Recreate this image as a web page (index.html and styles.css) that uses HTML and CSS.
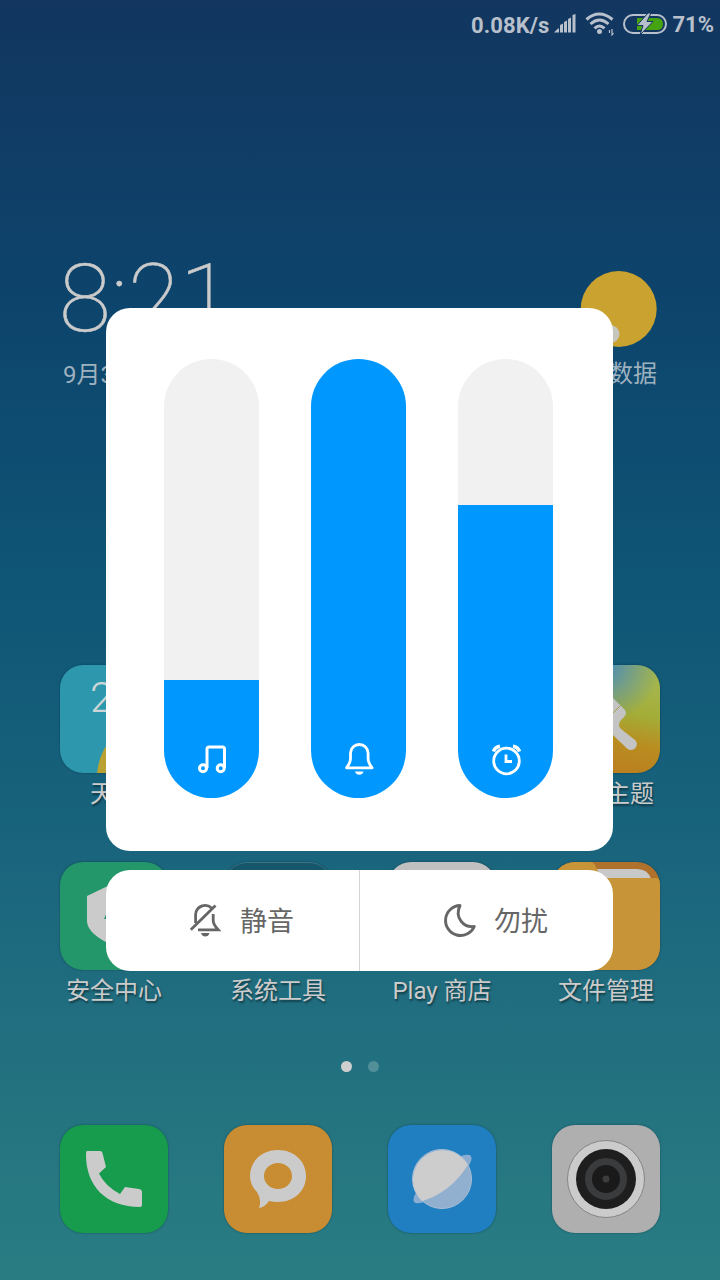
FILE: index.html
```html
<!DOCTYPE html>
<html lang="zh-CN">
<head>
<meta charset="utf-8">
<title>音量</title>
<link rel="stylesheet" href="styles.css">
</head>
<body>
<div class="phone">
  <header class="status">
    <span class="speed">0.08K/s</span>
    <svg class="signal" width="22" height="20" viewBox="0 0 22 20" fill="#b8c0cc"><path d="M0 18.500l4-4h1v4zM6 11l3-1.500v9H6zM10 8l3-1.500v12h-3zM14 5l3-1.500v15h-3zM18.500 1L21.500 0v18.500h-3z"/></svg>
    <svg class="wifi" width="30" height="24" viewBox="0 0 30 24" fill="none" stroke="#b8c0cc" stroke-width="3"><path d="M1.500 7.500q12.500-11 26 0M5.500 12q9-8 18 0M9.500 16.300q5-4.500 10 0"/><circle cx="14.500" cy="19.500" r="2.500" fill="#b8c0cc" stroke="none"/><path stroke-width="1.200" d="M24.500 18v3M27 17v6l1.500-2"/></svg>
    <svg class="battery" width="44" height="22" viewBox="0 0 44 22"><rect x="1" y="2" width="42" height="18" rx="9" fill="none" stroke="#b8c0cc" stroke-width="2"/><path d="M14 5h20q6 0 6 6t-6 6H14z" fill="#45a30f"/><path d="M25 0L14 12.500h6L17 22l13-13.500h-6l4-8.500z" fill="#b8c0cc" stroke="#12375f" stroke-width="1"/></svg>
    <span class="percent">71%</span>
  </header>

  <section class="widget">
    <div class="clock">
      <div class="time">8<span class="colon">:</span>21</div>
      <div class="date">9月3日 星期二</div>
    </div>
    <div class="weather">
      <svg width="78" height="76" viewBox="0 0 78 76"><circle cx="38.700" cy="38" r="38" fill="#caa22f"/><circle cx="30.500" cy="63" r="9" fill="#c6c6bd"/></svg>
      <div class="weather-text">无数据</div>
    </div>
  </section>

  <main class="apps">
    <div class="app">
      <svg class="icon teal" viewBox="0 0 108 108"><path d="M37 108C40 82 56 62 80 60v48z" fill="#b9a132"/><text x="30" y="47" class="temp">26</text></svg>
      <span class="label">天气</span>
    </div>
    <div class="app"></div>
    <div class="app"></div>
    <div class="app">
      <svg class="icon theme" viewBox="0 0 108 108"><path d="M40 40L61 33l11 11q4 4 0 8l-3 3q-4 5 0 9l14 11a5.600 5.600 0 0 1-8 8.500L61 70 45 57z" fill="#c4c4c4"/><path d="M59 50l9-9" stroke="#a69b49" stroke-width="1"/></svg>
      <span class="label">个性主题</span>
    </div>
    <div class="app">
      <svg class="icon green" viewBox="0 0 108 108"><path d="M27 34l27-13 27 13v25q0 13-27 25Q27 72 27 59z" fill="#cbcbcb"/><path d="M44 57l9-21 9 21z" fill="#23966a"/></svg>
      <span class="label">安全中心</span>
    </div>
    <div class="app">
      <div class="icon folder"></div>
      <span class="label">系统工具</span>
    </div>
    <div class="app">
      <div class="icon store"></div>
      <span class="label">Play 商店</span>
    </div>
    <div class="app">
      <svg class="icon files" viewBox="0 0 108 108"><path d="M30 7h55q11 0 14 10H30z" fill="#c8c8c8"/><path d="M0 0h38q4 0 6 5l3 6q3 5 8 5h49q4 0 4 4v88H0z" fill="#c79438"/></svg>
      <span class="label">文件管理</span>
    </div>
  </main>

  <div class="pages"><i class="dot on"></i><i class="dot"></i></div>

  <nav class="dock">
    <svg class="icon phone-icon" viewBox="0 0 108 108"><path d="M27 26h13q2 0 2.500 2L46 42l-7 6.500q6 12.500 21 20.500l5-7 14 2q3 .500 3 3v13q0 2-2 2C46 82 26 61 26 30q0-4 1-4z" fill="#cbcbcb"/></svg>
    <svg class="icon sms-icon" viewBox="0 0 108 108"><path fill="#cbcbcb" fill-rule="evenodd" d="M54 25c16 0 28 11 28 26S70 77 54 77q-5 0-9-1-4 6-10 7 3-8-2-16-7-7-7-16c0-15 12-26 28-26zm0 13a14 13 0 1 0 0 26 14 13 0 1 0 0-26z"/></svg>
    <svg class="icon web-icon" viewBox="0 0 108 108"><ellipse cx="54.500" cy="54" rx="36.500" ry="10" transform="rotate(-39 54.500 54)" fill="#8badd1"/><circle cx="54" cy="54" r="29.500" fill="#91afcf" stroke="#a9bed5" stroke-width="1"/><path d="M34 76A29.500 29.500 0 1 1 80 40Q62 68 34 76z" fill="#cdcdcd"/></svg>
    <svg class="icon camera-icon" viewBox="0 0 108 108"><circle cx="54" cy="54" r="38.500" fill="#cbcbcb" stroke="#858585" stroke-width="1"/><circle cx="54" cy="54" r="30" fill="#1e1e1f"/><circle cx="54" cy="54" r="17.500" fill="#1a1a1a" stroke="#3a3b3d" stroke-width="7"/><circle cx="54" cy="54" r="3.500" fill="#3d3d3d"/></svg>
  </nav>

  <div class="overlay">
    <section class="sliders">
      <div class="slider"><div class="fill" style="height:118px">
        <svg width="36" height="36" viewBox="0 0 36 36" fill="none" stroke="#fff" stroke-width="3"><circle cx="9" cy="27.300" r="3.500"/><circle cx="26.700" cy="27.300" r="3.500"/><path d="M13 27V8q0-2 2-2H28.500q2 0 2 2V27"/></svg>
      </div></div>
      <div class="slider"><div class="fill" style="height:439px">
        <svg width="36" height="36" viewBox="0 0 36 36" fill="none" stroke="#fff" stroke-width="2.800" stroke-linejoin="round"><path d="M5.500 26.800q4-5 4-9v-5.500a8.800 8.800 0 0 1 17.600 0v5.500q0 4 4 9z"/><path d="M14 30.500h8.500q-1 3.300-4.200 3.300T14 30.500z" fill="#fff" stroke="none"/></svg>
      </div></div>
      <div class="slider"><div class="fill" style="height:293px">
        <svg width="36" height="36" viewBox="0 0 36 36" fill="none" stroke="#fff" stroke-width="2.800"><circle cx="18.500" cy="20" r="12.800"/><path d="M18 13.500V20.500h6" stroke-width="2.800"/><path d="M5.500 10.500Q7 6 12 5.300M31.500 10.500Q30 6 25 5.300" stroke-width="3.600"/></svg>
      </div></div>
    </section>
    <section class="modes">
      <button class="mode">
        <svg width="36" height="36" viewBox="0 0 36 36" fill="none" stroke="#666" stroke-width="2.800"><path d="M8.600 21V12.500a9.500 9.500 0 0 1 16-6.500M26.200 12v6.500q0 4 5 9.300H11M3.800 27.800L28.500 3.500"/><path d="M14 31h8.500q-1 3.500-4.200 3.500T14 31z" fill="#666" stroke="none"/></svg>
        <span>静音</span>
      </button>
      <button class="mode">
        <svg width="36" height="36" viewBox="0 0 36 36" fill="none" stroke="#666" stroke-width="2.900" stroke-linejoin="round"><path d="M19 3.500A15 15 0 1 0 33.300 24.500C22 26 13.500 15 19 3.500z"/></svg>
        <span>勿扰</span>
      </button>
    </section>
  </div>
</div>
</body>
</html>
```

FILE: styles.css
```css
* { box-sizing: border-box; }
body { margin: 0; font-family: Roboto, "Noto Sans CJK SC", sans-serif; }
svg { display: block; flex: none; }
.phone {
  position: relative;
  width: 720px;
  height: 1280px;
  overflow: hidden;
  display: flex;
  flex-direction: column;
  background: linear-gradient(#12365f 0, #0d446c 300px, #0f5676 600px, #18637c 820px, #206d7f 1000px, #297d82 1280px);
  color: #cbcbcb;
}
.status {
  height: 48px;
  padding-right: 6px;
  display: flex;
  align-items: center;
  justify-content: flex-end;
  font-size: 22px;
  font-weight: 700;
  color: #b8c0cc;
}
.speed { margin-right: 5px; padding-top: 2px; letter-spacing: .1px; }
.signal { margin-right: 9px; }
.wifi { margin-right: 8px; }
.battery { margin-right: 5px; }
.percent { padding-top: 1px; }

.widget {
  height: 617px;
  padding: 203px 62px 0 58px;
  display: flex;
  justify-content: space-between;
}
.time {
  padding-left: 1px;
  font-size: 94.5px;
  line-height: 96px;
  font-weight: 100;
  letter-spacing: .2px;
  white-space: nowrap;
  -webkit-text-stroke: .6px #cbcbcb;
}
.date { margin-top: 10px; font-size: 24px; line-height: 36px; padding-left: 5px; color: #9eb1bf; }
.weather { padding-top: 20px; }
.weather-text { margin-top: 9px; font-size: 24px; line-height: 36px; text-align: right; padding-right: 1px; color: #9eb1bf; }

.apps {
  height: 394px;
  padding: 0 32px;
  display: grid;
  grid-template-columns: repeat(4, 164px);
  grid-auto-rows: 197px;
}
.app { display: flex; flex-direction: column; align-items: center; }
.icon { width: 108px; height: 108px; border-radius: 23px; overflow: hidden; box-shadow: 0 0 2px rgba(0, 30, 50, .5); }
.label { margin-top: 3px; font-size: 24px; line-height: 36px; white-space: nowrap; text-shadow: 1px 2px 2px rgba(0, 0, 0, .45); }
.temp { font-size: 43px; font-weight: 300; fill: #cbd5d6; }
.teal { background: #2d98ad; }
.theme { background: radial-gradient(circle at 50px 0, #5590ad 10px, rgba(85, 144, 173, 0) 58px), linear-gradient(190deg, #a5b54a 20%, #a3ad38 42%, #b98d20 66%, #bc7a1e 100%); }
.green { background: #23966a; }
.folder { background: #16566b; border: 1px solid #3a7587; }
.store { background: #c0c0c0; }
.files { background: #b0712c; }

.pages { height: 66px; padding-top: 2px; display: flex; justify-content: center; gap: 16px; }
.dot { width: 11px; height: 11px; border-radius: 50%; background: #528f99; }
.dot.on { background: #cfcfcf; }
.dock { padding: 0 60px; display: flex; justify-content: space-between; }
.phone-icon { background: #179b4c; }
.sms-icon { background: #c88d32; }
.web-icon { background: #1f7fc0; }
.camera-icon { background: #afafaf; }

.overlay {
  position: absolute;
  left: 106px;
  top: 308px;
  width: 507px;
  display: flex;
  flex-direction: column;
  gap: 19px;
}
.sliders {
  height: 543px;
  padding: 51px 0 0 58px;
  display: flex;
  gap: 52px;
  background: #fff;
  border-radius: 24px;
}
.slider {
  width: 95px;
  height: 439px;
  border-radius: 48px;
  overflow: hidden;
  display: flex;
  align-items: flex-end;
  background: #f1f1f1;
}
.fill {
  width: 100%;
  padding-bottom: 21px;
  display: flex;
  justify-content: center;
  align-items: flex-end;
  background: #0098ff;
}
.modes {
  height: 101px;
  display: grid;
  grid-template-columns: 254px 253px;
  background: #fff;
  border-radius: 24px;
  overflow: hidden;
}
.mode {
  border: 0;
  padding: 0 0 0 16px;
  background: none;
  display: flex;
  align-items: center;
  justify-content: center;
  gap: 17px;
  font: 27px/40px Roboto, "Noto Sans CJK SC", sans-serif;
  color: #666;
}
.mode svg { margin-bottom: 2px; }
.mode span { padding-top: 2px; }
.mode:first-child { border-right: 1px solid #d5d5d5; }
```
